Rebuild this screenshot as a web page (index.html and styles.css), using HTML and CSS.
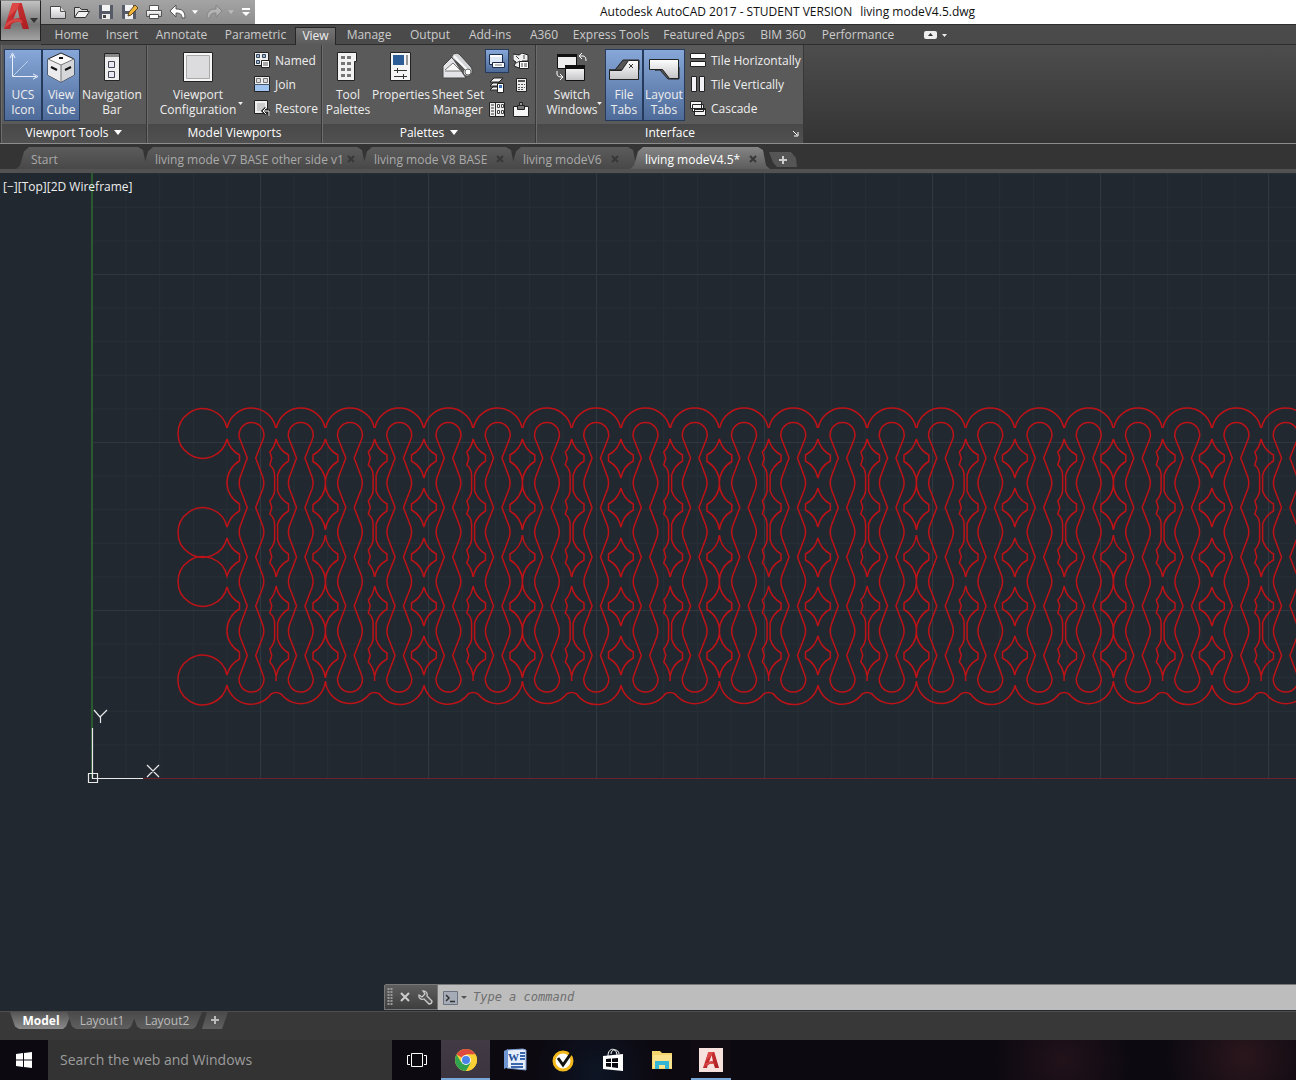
FILE: index.html
```html
<!DOCTYPE html>
<html lang="en">
<head>
<meta charset="utf-8">
<title>Autodesk AutoCAD 2017 - living modeV4.5.dwg</title>
<link rel="stylesheet" href="styles.css">
</head>
<body>
<svg class="defs" aria-hidden="true">
  <defs>
    <linearGradient id="silver" x1="0" y1="0" x2="0" y2="1"><stop offset="0" stop-color="#fff"/><stop offset="1" stop-color="#c4c4c8"/></linearGradient>
    <linearGradient id="logoRed" x1="0" y1="0" x2="1" y2="1"><stop offset="0" stop-color="#d8383a"/><stop offset="1" stop-color="#a81d21"/></linearGradient>
    <symbol id="acad" viewBox="0 0 24 26">
      <path d="M0 25 8 1h9l7 24h-6l-2-6c-4-1-7 0-9 2l-1 4zM13 6 9 16c2-1 4-1 6-1z" fill="url(#logoRed)" fill-rule="evenodd"/>
      <path d="M8 1 4 14l9-8 2-5zM2 20c5-5 11-5 15-3l1 3C13 17 7 18 1 24z" fill="#e2524e" opacity=".7"/>
    </symbol>
    <symbol id="cross" viewBox="0 0 10 10"><path d="m2 2 6 6m0-6-6 6" stroke="currentColor" stroke-width="2" fill="none"/></symbol>
    <symbol id="down" viewBox="0 0 8 5"><path d="M0 0h8L4 5z" fill="currentColor"/></symbol>
    <symbol id="plus" viewBox="0 0 10 10"><path d="M5 1v8M1 5h8" stroke="currentColor" stroke-width="2"/></symbol>
  </defs>
</svg>

<header class="top">
  <button class="app-button" aria-label="Application menu">
    <svg width="25" height="28" viewBox="0 0 24 26" preserveAspectRatio="none"><use href="#acad" width="24" height="26"/></svg>
    <svg class="app-arrow" width="8" height="5"><use href="#down"/></svg>
  </button>
  <div class="top-rows">
    <div class="title-row">
      <div class="quick">
        <button aria-label="New"><svg width="18" height="16"><path d="M1.500 2.500h10l5 5v7h-15z" fill="url(#silver)" stroke="#444"/><path d="M11.500 2.500v5h5" fill="#ddd" stroke="#555"/></svg></button>
        <button aria-label="Open"><svg width="18" height="16"><path d="M1.500 13.500v-10h5l2 2h6v3" fill="#ddd" stroke="#333"/><path d="m1.500 13.500 4-6h11l-4 6z" fill="#f2f2f2" stroke="#333"/></svg></button>
        <button aria-label="Save"><svg width="18" height="16"><path d="M2 1h14v14H3l-1-1z" fill="#555a66"/><path d="M5 1h8v6H5z" fill="#f4f4f4"/><path d="M5 10h8v5H5z" fill="#eee"/><path d="M6 11h3v3H6z" fill="#444"/></svg></button>
        <button aria-label="Save as"><svg width="18" height="16"><path d="M1 1h14v14H2l-1-1z" fill="#555a66"/><path d="M4 1h8v6H4z" fill="#f4f4f4"/><path d="M4 10h8v5H4z" fill="#eee"/><path d="m7 12 1-4 6-7 3 3-7 7z" fill="#f2b63c" stroke="#5b4722"/></svg></button>
        <button aria-label="Plot"><svg width="18" height="16"><path d="M4.500 1.500h9v5h-9z" fill="#fff" stroke="#555"/><path d="M1.500 6.500h15v6h-15z" fill="url(#silver)" stroke="#555"/><path d="M4.500 10.500h9v4h-9z" fill="#fff" stroke="#555"/></svg></button>
        <button aria-label="Undo"><svg width="18" height="16"><path d="m1 7 6-6v4c6 0 9 2 9 9h-3c0-4-2-5-6-5v4z" fill="#fff" stroke="#555"/></svg></button>
        <svg class="mini" width="6" height="4"><use href="#down" width="6" height="4"/></svg>
        <button aria-label="Redo"><svg width="18" height="16"><path d="m17 7-6-6v4c-6 0-9 2-9 9h3c0-4 2-5 6-5v4z" fill="#b3b3b3" stroke="#858585"/></svg></button>
        <svg class="mini faint" width="6" height="4"><use href="#down" width="6" height="4"/></svg>
        <button class="narrow" aria-label="Customize"><svg width="10" height="10"><path d="M1 1h8v2H1zM1 5h8L5 9z" fill="#fff"/></svg></button>
      </div>
      <p class="window-title"><span>Autodesk AutoCAD 2017 - STUDENT VERSION</span><span>living modeV4.5.dwg</span></p>
    </div>
    <nav class="ribbon-tabs">
      <button>Home</button><button>Insert</button><button>Annotate</button><button>Parametric</button><button class="active">View</button><button>Manage</button><button>Output</button><button>Add-ins</button><button>A360</button><button>Express Tools</button><button>Featured Apps</button><button>BIM 360</button><button>Performance</button>
      <button class="minimise" aria-label="Minimize ribbon"><svg width="24" height="10"><rect y="1" width="13" height="8" rx="2" fill="#eee"/><path d="M4 6h5L6.500 3z" fill="#333"/><path d="M18 4h5l-2.500 3z" fill="#eee"/></svg></button>
    </nav>
  </div>
</header>

<section class="ribbon">
  <div class="panel p-tools">
    <div class="panel-body">
      <button class="big on w-ucs"><svg width="32" height="32"><path d="M5.500 4v21.500H29" fill="none" stroke="#e9f0fa"/><path d="m3 7 2.500-5L8 7M26 23l5 2.500-5 2.500" fill="none" stroke="#e9f0fa"/><path d="M6 25 21 10" stroke="#bdd0ea"/></svg><span>UCS<br>Icon</span></button>
      <button class="big on w-cube"><svg width="32" height="32"><path d="m16 2 13 6v16l-13 7L3 24V8z" fill="#fafafa" stroke="#222"/><path d="m16 14 13-6v16l-13 7z" fill="#d5d7da"/><path d="M3 8l13 6v17L3 24z" fill="#ececee"/><path d="M3 8l13 6 13-6M16 14v17" fill="none" stroke="#777"/><path d="M14 7h4M6 16l6 3m8 0 6-3" stroke="#111" stroke-width="2"/></svg><span>View<br>Cube</span></button>
      <button class="big w-nav"><svg width="32" height="32"><path d="M8.500 2.500h15v27h-15z" fill="#eee" stroke="#222"/><path d="M9 3h14v3H9z" fill="#888"/><path d="M12.500 10.500h6v6h-6zM12.500 20.500h6v6h-6z" fill="#e8e8f0" stroke="#445"/></svg><span>Navigation<br>Bar</span></button>
    </div>
    <h2>Viewport Tools <svg width="8" height="5"><use href="#down" width="8" height="5"/></svg></h2>
  </div>
  <div class="panel p-views">
    <div class="panel-body">
      <button class="big w-config"><svg width="32" height="32"><path d="M1.500 1.500h29v29h-29z" fill="#f6f6f6" stroke="#222"/><path d="M4.500 4.500h23v23h-23z" fill="#dcdcde" stroke="#aaa"/></svg><span>Viewport<br>Configuration</span><svg class="drop" width="5" height="3"><use href="#down" width="5" height="3"/></svg></button>
      <div class="rows">
        <button><svg width="16" height="16"><path d="M.5.5h14v13H.5z" fill="#eee" stroke="#222"/><path d="M2.500 2.500h3v3h-3zM2.500 8.500h3v3h-3zM8.500 2.500h3v3h-3z" fill="#9db6d8" stroke="#345"/><path d="M7.500 8.500h8v7h-8z" fill="#fff" stroke="#222"/><path d="M9 11h5M9 13h5" stroke="#555"/></svg>Named</button>
        <button><svg width="16" height="16"><path d="M.5.5h15v15H.5z" fill="#eee" stroke="#222"/><path d="M2.500 2.500h4v4h-4zM9.500 2.500h4v4h-4z" fill="#ddd" stroke="#777"/><path d="M1 9h14v6H1z" fill="#9fc4ef"/><path d="M0 8.500h16" stroke="#456"/></svg>Join</button>
        <button><svg width="16" height="16"><path d="M.5.5h13v13H.5z" fill="#eee" stroke="#222"/><path d="M3 3h8v8H3z" fill="#ccc"/><path d="M15 16v-5H9m3-3-3 3 3 3" fill="none" stroke="#222" stroke-width="3"/><path d="M15 16v-5H9m3-3-3 3 3 3" fill="none" stroke="#fff"/></svg>Restore</button>
      </div>
    </div>
    <h2>Model Viewports</h2>
  </div>
  <div class="panel p-palettes">
    <div class="panel-body">
      <button class="big w-tool"><svg width="32" height="32"><path d="M5.500 1.500h19v9h-2v19h-17z" fill="#f2f2f2" stroke="#222"/><path d="M9 5h4v3H9zm6 0h4v3h-4zM9 11h4v3H9zm6 0h4v3h-4zM9 17h4v3H9zm6 0h4v3h-4zM9 23h4v3H9zm6 0h4v3h-4z" fill="#777"/></svg><span>Tool<br>Palettes</span></button>
      <button class="big w-props"><svg width="32" height="32"><path d="M5.500 1.500h20v28h-20z" fill="#f5f5f5" stroke="#222"/><path d="M8 4h11v10H8z" fill="#2d5d96"/><path d="M21 4h2v10h-2z" fill="#999"/><path d="M9 19.500h13M9 25.500h13M12.500 17v5m6 1v5" stroke="#333"/></svg><span>Properties</span></button>
      <button class="big w-sheet"><svg width="32" height="32"><path d="m1 15 9-9 6 9 8 12H1z" fill="#e4e4e8" stroke="#444"/><path d="M10 7c-1-5 6-6 8-3l11 12c3 5 0 10-5 9-3-1-4-5-1-7z" fill="#d4d5d9" stroke="#444"/><path d="m12 5 13 14" stroke="#fafafa" stroke-width="2"/><path d="m3 19 8-7 8 8H3" fill="#f8f8f8" stroke="#777"/><circle cx="26" cy="21" r="3" fill="#fff" stroke="#666"/></svg><span>Sheet Set<br>Manager</span></button>
      <div class="icon-grid">
        <button class="on" aria-label="Command line"><svg width="18" height="18"><path d="M1.500 2.500h13v10h-13z" fill="#dfe9f6" stroke="#1c2c48"/><path d="M2 3h12v2H2z" fill="#fff"/><path d="M4.500 10.500h12v5h-12z" fill="#fff" stroke="#1c2c48"/><path d="M7 13h7" stroke="#777"/></svg></button>
        <button aria-label="External references"><svg width="16" height="16"><path d="m0 1 6 1 3-2 6 2v6H9l-3 7-5-2 2-4-3-2z" fill="#eee" stroke="#222"/><path d="m3 3 3 3m5-4v4m-8 4 4-2" stroke="#444"/><path d="M6.500 8.500h9v7h-9z" fill="#fff" stroke="#222"/><path d="M8 11h2m1 0h3m-6 2h2m1 0h3" stroke="#444"/></svg></button>
        <button aria-label="Layer properties"><svg width="16" height="16"><path d="m1 5 4-4h9l-4 4zM1 9l3-3h8l-3 3zM1 13l3-3h7l-3 3z" fill="#f5f5f5" stroke="#222"/><path d="M8.500 6.500h6v9h-6z" fill="#fff" stroke="#222"/><path d="M10 8h3v3h-3z" fill="#3d73b8"/></svg></button>
        <button aria-label="Calculator"><svg width="16" height="16"><path d="M3.500 1.500h10v13h-10z" fill="#eee" stroke="#222"/><path d="M5 3h7v2H5zM5 7h2v1H5zm3 0h2v1H8zm3 0h1v1h-1zM5 10h2v1H5zm3 0h2v1H8zm3 0h1v1h-1zM5 12h2v1H5zm3 0h2v1H8z" fill="#555"/></svg></button>
        <button aria-label="Design center"><svg width="16" height="16"><path d="M.5 1.500h15v14H.5z" fill="#eee" stroke="#222"/><path d="M6.500 2v13M2 4h3M2 7h3M2 10h3M2 13h3" stroke="#333"/><path d="M8.500 3.500h2v3h-2zm4 0h2v3h-2zm-4 6h2v3h-2zm4 0h2v3h-2z" fill="#fff" stroke="#444"/></svg></button>
        <button aria-label="Markup set manager"><svg width="16" height="16"><path d="M.5 5.500h15v10H.5z" fill="#f6f6f6" stroke="#222"/><path d="M4.500 4.500h7v4h-7z" fill="#777" stroke="#222"/><path d="M6.500 1.500h3v3h-3z" fill="#999" stroke="#222"/></svg></button>
      </div>
    </div>
    <h2>Palettes <svg width="8" height="5"><use href="#down" width="8" height="5"/></svg></h2>
  </div>
  <div class="panel p-interface">
    <div class="panel-body">
      <button class="big w-switch"><svg width="32" height="32"><path d="M1.500 3.500h19v14h-19z" fill="#eee" stroke="#111"/><path d="M1 3h20v3H1z" fill="#111"/><path d="M9.500 14.500h19v15h-19z" fill="url(#silver)" stroke="#111"/><path d="M9 14h20v4H9z" fill="#111"/><path d="M24 5h3q3 0 3 5M26 2l-3 3 3 3M1 20v3q0 3 5 3M4 23l3 3-3 3" fill="none" stroke="#fff"/></svg><span>Switch<br>Windows</span><svg class="drop" width="5" height="3"><use href="#down" width="5" height="3"/></svg></button>
      <button class="big on w-file"><svg width="32" height="32"><path d="M1 19h6l8-10h16v10z" fill="#555" stroke="#222"/><path d="M1.500 28.500v-9h12l7-10h10v19z" fill="url(#silver)" stroke="#222"/><path d="m21 13 4 4m0-4-4 4" stroke="#333"/></svg><span>File<br>Tabs</span></button>
      <button class="big on w-layout"><svg width="32" height="32"><path d="M7 19h5l8 9h11V16z" fill="#555" stroke="#222"/><path d="M1.500 8.500h29v19h-9l-7-9h-13z" fill="url(#silver)" stroke="#222"/></svg><span>Layout<br>Tabs</span></button>
      <div class="rows">
        <button><svg width="16" height="16"><path d="M.5 1.500h15v5H.5zM.5 9.500h15v5H.5z" fill="#fff" stroke="#222"/></svg>Tile Horizontally</button>
        <button><svg width="16" height="16"><path d="M1.500.5h5v15h-5zM9.500.5h5v15h-5z" fill="#f1f1f6" stroke="#222"/></svg>Tile Vertically</button>
        <button><svg width="16" height="16"><path d="M.5 1.500h11v7H.5zM2.500 4.500h11v7h-11zM4.500 8.500h11v7h-11z" fill="#f4f4f4" stroke="#222"/><path d="M5 9h10v1H5z" fill="#222"/></svg>Cascade</button>
      </div>
    </div>
    <h2>Interface <svg class="launcher" width="7" height="7"><path d="m1 1 4 4M6 2v4H2" fill="none" stroke="#fff"/></svg></h2>
  </div>
</section>

<nav class="file-tabs">
  <button class="ft-start"><span>Start</span></button>
  <button><span>living mode V7 BASE other side v1</span><svg width="10" height="10"><use href="#cross"/></svg></button>
  <button><span>living mode V8 BASE</span><svg width="10" height="10"><use href="#cross"/></svg></button>
  <button><span>living modeV6</span><svg width="10" height="10"><use href="#cross"/></svg></button>
  <button class="active"><span>living modeV4.5*</span><svg width="10" height="10"><use href="#cross"/></svg></button>
  <button class="add" aria-label="New drawing"><svg width="10" height="10"><use href="#plus"/></svg></button>
</nav>

<main class="canvas">
  <svg class="drawing" aria-label="Living hinge pattern">
    <defs>
      <pattern id="minor" patternUnits="userSpaceOnUse" x="92" y="269" width="33.600" height="33.600"><path d="M0 .5h33.600M.5 0v33.600" stroke="#262e36"/></pattern>
      <pattern id="major" patternUnits="userSpaceOnUse" x="92" y="101" width="168" height="168"><path d="M0 .5h168M.5 0v168" stroke="#2f3840"/></pattern>
      <path id="slot" d="M-11.500 266.500A12.400 12.400 0 1 1 11.500 266.500L4.200 285 11.300 304Q13.300 310 11.300 316L4.200 334.500 11.300 353Q13.300 359 11.300 365L4.200 384 11.300 402.500Q13.300 408.500 11.300 414.500L4.200 433 11.300 452Q13.300 458 11.300 464L4.200 482.500 11.500 502A12.400 12.400 0 1 1-11.500 502L-4.200 482.500-11.300 464Q-13.300 458-11.300 452L-4.200 433-11.300 414.500Q-13.300 408.500-11.300 402.500L-4.200 384-11.300 365Q-13.300 359-11.300 353L-4.200 334.500-11.300 316Q-13.300 310-11.300 304L-4.200 285z"/>
      <path id="crest" d="M-24.100 255v-1A24.800 24.800 0 0 1 24.100 254v1"/>
      <path id="keyed" d="M0 266A25 25 0 0 0 12.400 282V288A24.700 24.700 0 0 0 1.500 302V318A24.700 24.700 0 0 0 12.400 331V338A24.700 24.700 0 0 0 1.500 351V367A24.700 24.700 0 0 0 12.400 381V387A24.700 24.700 0 0 0 0 404Q-1.500 395-6.300 390L-4.300 384-6.300 377Q-1.500 371-1.500 366V352Q-1.500 345-6.300 341L-4.300 334.500-6.300 328Q-1.500 322-1.500 317V303Q-1.500 296-6.300 292L-4.300 285-6.300 279Q-1.500 274 0 266zM0 413A25 25 0 0 0 12.400 430V436A24.700 24.700 0 0 0 1.500 450V466A24.700 24.700 0 0 0 12.400 480V486A24.700 24.700 0 0 0 0 503V508 503Q-1.500 494-6.300 489L-4.300 482.500-6.300 476Q-1.500 470-1.500 465V451Q-1.500 444-6.300 440L-4.300 433-6.300 427Q-1.500 422 0 413z"/>
      <path id="chain" d="M0 266A25 25 0 0 0 12.400 282V288.500A24.700 24.700 0 0 0 12.400 331.500V338A25 25 0 0 0 0 357A25 25 0 0 0-12.400 338V331.500A24.700 24.700 0 0 0-12.400 288.500V282A25 25 0 0 0 0 266zM0 362A25 25 0 0 0 12.400 381V387A24.700 24.700 0 0 0 12.400 430V436.500A24.700 24.700 0 0 0 12.400 479.500V486A25 25 0 0 0 0 505A25 25 0 0 0-12.400 486V479.500A24.700 24.700 0 0 0-12.400 436.500V430A24.700 24.700 0 0 0-12.400 387V381A25 25 0 0 0 0 362z"/>
      <path id="gem" d="M0-19A25 25 0 0 0 12.400-3V3A25 25 0 0 0 0 20A25 25 0 0 0-12.400 3V-3A25 25 0 0 0 0-19z"/>
      <g id="gems"><use href="#gem" y="285"/><use href="#gem" y="334"/><use href="#gem" y="384"/><use href="#gem" y="433"/><use href="#gem" y="482"/></g>
      <g id="motif">
        <use href="#slot"/><use href="#slot" x="49.250"/><use href="#slot" x="98.500"/><use href="#slot" x="147.750"/>
        <use href="#crest"/><use href="#crest" x="49.250"/><use href="#crest" x="98.500"/><use href="#crest" x="147.750"/>
        <use href="#keyed" x="24.600"/><use href="#chain" x="73.900"/><use href="#keyed" x="123.100"/><use href="#gems" x="172.400"/>
        <path d="M-24.600 512A24.800 24.800 0 0 0 19.600 521Q24.600 518 29.600 521A24.800 24.800 0 0 0 73.900 508A24.800 24.800 0 0 0 118.100 521Q123.100 518 128.100 521A24.800 24.800 0 0 0 172.400 513"/>
      </g>
    </defs>
    <svg width="100%" height="605">
      <rect x="92" width="100%" height="605" fill="url(#minor)"/>
      <rect x="92" width="100%" height="605" fill="url(#major)"/>
    </svg>
    <path d="M92 0v605" stroke="#28592f" stroke-width="2"/>
    <path d="M92 605.500h3000" stroke="#6b2228"/>
    <g class="cut">
      <use href="#motif" x="251.500"/><use href="#motif" x="448.500"/><use href="#motif" x="645.500"/><use href="#motif" x="842.500"/><use href="#motif" x="1039.500"/><use href="#motif" x="1236.500"/><use href="#motif" x="1433.500"/><use href="#motif" x="1630.500"/>
      <path d="M227 255A24.800 24.800 0 1 0 227 266Q230 277 239.500 282V288A24.700 24.700 0 0 0 239.500 331V338Q230 343 227 354A24.800 24.800 0 1 0 227 365Q230 376 239.500 381V388Q230 393 227 403A24.800 24.800 0 1 0 227 414Q230 425 239.500 430V436A24.700 24.700 0 0 0 239.500 479V486Q230 491 227 502A24.800 24.800 0 1 0 227 512"/>
    </g>
    <g class="ucs"><path d="M92.500 555v50.500H143M88.500 600.500h9v9h-9zM94 537l6 7 7-7M100.500 544v6M147 592l12 12m0-12-12 12"/></g>
  </svg>
  <p class="view-label">[−][Top][2D Wireframe]</p>
  <form class="command">
    <div class="command-tools">
      <svg width="6" height="20"><path d="M1.500 1v18M4.500 1v18" stroke="#999" stroke-width="2" stroke-dasharray="2 1"/></svg>
      <button type="button" aria-label="Close"><svg width="12" height="14"><path d="m2 3 8 8m0-8-8 8" stroke="#ccc" stroke-width="2"/></svg></button>
      <button type="button" aria-label="Customize"><svg width="16" height="16"><path d="M6 2c3 0 5 2 4 5l5 5c0 2-1 3-3 3L7 10C4 11 1 9 2 6l3 2 3-3z" fill="#555" stroke="#ccc" stroke-width="1.300"/></svg></button>
    </div>
    <label class="prompt" for="cmd"><svg width="24" height="14" role="img" aria-label="Command"><path d="M.5.500h14v13H.5z" fill="#a5acb8" stroke="#6c7380"/><path d="m3 4 3 3-3 3M7 10.500h5" fill="none" stroke="#333" stroke-width="1.500"/><path d="M18 5h6l-3 3z" fill="#555"/></svg></label>
    <input id="cmd" type="text" placeholder="Type a command">
  </form>
</main>

<nav class="layout-tabs">
  <button class="active">Model</button><button>Layout1</button><button>Layout2</button>
  <button class="add" aria-label="New layout"><svg width="10" height="10"><use href="#plus"/></svg></button>
</nav>

<footer class="taskbar">
  <button class="start" aria-label="Start"><svg width="16" height="16"><path d="m0 2 7-1v6.500H0zM8 1l8-1v7.500H8zM0 8.500h7V15l-7-1zM8 8.500h8V16l-8-1z" fill="#fff"/></svg></button>
  <input class="search" type="text" aria-label="Search" placeholder="Search the web and Windows">
  <button aria-label="Task view"><svg width="20" height="16"><path d="M4.500 1.500h11v13h-11zM3 3.500H.5v9H3M17 3.500h2.500v9H17" fill="none" stroke="#fff"/></svg></button>
  <button class="running" aria-label="Chrome"><svg width="22" height="22" viewBox="0 0 22 22"><circle cx="11" cy="11" r="11" fill="#fbd035"/><path d="M11 11 1.500 5.500A11 11 0 0 1 20.500 5.500H11z" fill="#dd4b3e"/><path d="M1.500 5.500A11 11 0 0 0 11 22l5-8-5-3-5 2z" fill="#30a250"/><path d="M11 22a11 11 0 0 0 9.500-16.500H11l5 8z" fill="#fbd035"/><circle cx="11" cy="11" r="5" fill="#f4f4f4"/><circle cx="11" cy="11" r="4" fill="#4a83e8"/></svg></button>
  <button aria-label="Word"><svg width="24" height="24"><path d="M4 2 20 1l3 1v20L4 20z" fill="#e6eefa" stroke="#7b9bcc"/><path d="M1 3 5 1v18l-4 2z" fill="#6f96d2"/><path d="M8 16h12M8 19h12M17 5h5M17 8h5M17 11h5" stroke="#3a66ad" stroke-width="2"/><text x="5" y="13" class="word-w">W</text></svg></button>
  <button aria-label="Norton"><svg width="24" height="24"><circle cx="11" cy="13" r="9" fill="#fff" stroke="#f2b81c" stroke-width="3"/><path d="m6 10 5 7L20 4" fill="none" stroke="#111" stroke-width="3"/></svg></button>
  <button aria-label="Store"><svg width="24" height="24"><path d="M7 8c0-9 9-9 9 0M10 6c0-6 8-5 8 0" fill="none" stroke="#fff"/><path d="m2 8 20-2v17L2 21z" fill="#fff"/><path d="m5 11 5-.500V14H5zm6-.600 6-.400v4h-6zM5 15h5v4l-5-.500zm6 0h6v5l-6-.800z" fill="#08060f"/></svg></button>
  <button aria-label="File Explorer"><svg width="24" height="24"><path d="M2 3h8l2 2h10v16H2z" fill="#f2d56b"/><path d="M3 7h19v13H3z" fill="#fbe38d"/><path d="M5 13h14v8h-4v-4H9v4H5z" fill="#35b5d4"/></svg></button>
  <button class="running autocad" aria-label="AutoCAD"><svg width="24" height="24"><path d="M0 0h24v24H0z" fill="#f7e2de"/><use href="#acad" x="4" y="3" width="16" height="18"/></svg></button>
</footer>
</body>
</html>
```
FILE: styles.css
```css
* { box-sizing: border-box; }

body {
  margin: 0;
  height: 100vh;
  display: flex;
  flex-direction: column;
  overflow: hidden;
  background: #21282f;
  color: #eee;
  font: 12px/15px "Open Sans", "Noto Sans", sans-serif;
}

button, input { font: inherit; color: inherit; border: 0; margin: 0; padding: 0; background: none; }
h2, p { margin: 0; font-size: inherit; font-weight: 400; }
svg { flex: none; display: block; }
.defs { position: absolute; width: 0; height: 0; }

/* title bar and ribbon tabs */
.top { display: flex; flex: none; background: #4a4a4a; }
.app-button {
  width: 41px; height: 41px; flex: none;
  display: flex; align-items: flex-start; gap: 1px;
  margin-bottom: -1px; padding: 1px 0 0 3px;
  border: 1px solid #222; border-top-color: #888;
  background: linear-gradient(#c2c2c2, #777 60%, #a2a2a2);
  color: #333;
}
.app-arrow { margin-top: 16px; }
.top-rows { flex: 1; min-width: 0; }
.title-row { display: flex; height: 24px; background: #fff; color: #111; }
.quick {
  display: flex; align-items: center; flex: none;
  width: 214px; padding-left: 5px;
  background: linear-gradient(#a4a4a4, #8e8e8e);
}
.quick button { width: 24px; flex: none; display: grid; place-items: center; }
.quick .narrow { width: 16px; }
.mini { margin: 0 4px 0 2px; color: #fff; }
.faint { color: #bbb; }
.window-title { flex: 1; display: flex; gap: 8px; padding: 4px 0 0 345px; white-space: nowrap; }
.ribbon-tabs {
  display: grid;
  grid-template-columns: 51px 50px 69px 79px 41px 66px 56px 64px 44px 90px 96px 62px 88px 68px;
  height: 21px; padding-left: 5px;
  border-top: 1px solid #2c2c2c; border-bottom: 1px solid #2c2c2c;
  background: #4a4a4a; color: #ccc;
}
.ribbon-tabs button { white-space: nowrap; }
.ribbon-tabs .active {
  margin: 2px 0 -1px; padding-bottom: 2px;
  border: 1px solid #262626; border-bottom: 0;
  background: linear-gradient(#747474, #5a5a5a);
  color: #eee;
}
.minimise { display: grid; place-items: center; }

/* ribbon */
.ribbon {
  display: flex; flex: none; height: 99px;
  padding-left: 1px;
  border-bottom: 1px solid #8c8c8c;
  background: linear-gradient(#4d4d4d, #343434);
}
.panel {
  display: flex; flex-direction: column; flex: none;
  border-right: 1px solid #383838; border-left: 1px solid #6c6c6c;
  background: #5a5a5a;
}
.p-tools { width: 146px; }
.p-views { width: 175px; }
.p-palettes { width: 214px; }
.p-interface { width: 268px; }
.panel-body { display: flex; flex: 1; padding: 4px 2px 3px; }
.panel h2 {
  display: flex; align-items: center; justify-content: center; gap: 6px;
  height: 19px; flex: none; position: relative;
  padding-bottom: 3px;
  background: linear-gradient(#484848, #515151);
  color: #fff;
}
.launcher { position: absolute; right: 4px; bottom: 6px; }
.big {
  position: relative; flex: none;
  display: flex; flex-direction: column; align-items: center; gap: 4px;
  padding-top: 1px;
  border: 1px solid transparent;
  white-space: nowrap;
}
.big.on, .icon-grid .on { border-color: #263a5c; background: linear-gradient(#86a7d8, #4d6a98); }
.big span { margin: 0 -8px; }
.drop { position: absolute; right: 2px; top: 52px; }
.w-ucs, .w-cube, .w-file { width: 38px; }
.w-nav { width: 64px; }
.w-config { width: 96px; }
.w-tool { width: 46px; }
.w-props { width: 60px; }
.w-sheet { width: 54px; }
.w-switch { width: 66px; }
.w-layout { width: 42px; }
.rows { display: grid; grid-template-rows: repeat(3, 24px); margin: -1px 0 0 8px; }
.p-interface .rows { margin-left: 5px; }
.rows button { display: flex; align-items: center; gap: 5px; white-space: nowrap; }
.icon-grid { display: grid; grid-template: repeat(3, 24px) / 24px 24px; }
.icon-grid button { display: grid; place-items: center; border: 1px solid transparent; }

/* drawing tabs */
.file-tabs {
  display: flex; flex: none; height: 29px;
  padding: 3px 0 0 16px;
  border-bottom: 4px solid #525252;
  background: #343434; color: #aaa;
}
.file-tabs button {
  display: flex; align-items: center; gap: 8px; flex: none;
  margin-right: -10px; padding: 2px 20px 0 15px;
  background: linear-gradient(#5c5c5c, #484848);
  clip-path: polygon(0 100%, 4px 84%, 8px 20%, 13px 0, calc(100% - 12px) 0, calc(100% - 7px) 14%, calc(100% - 4px) 84%, 100% 100%);
  white-space: nowrap;
}
.file-tabs button:nth-child(1) { width: 134px; }
.file-tabs button:nth-child(2) { width: 229px; }
.file-tabs button:nth-child(3) { width: 159px; padding-right: 24px; }
.file-tabs button:nth-child(4) { width: 132px; }
.file-tabs button:nth-child(5) { width: 140px; padding-right: 26px; }
.file-tabs button:nth-child(2) { gap: 2px; padding-right: 22px; }
.file-tabs button span { flex: 1; text-align: left; }
.file-tabs svg { color: #383838; }
.file-tabs .active { background: linear-gradient(#858585, #5c5c5c); color: #fff; }
.file-tabs .add {
  width: 28px; height: 15px; margin: 5px 0 0 9px; padding: 0 9px;
  background: #555;
  clip-path: polygon(0 0, 22px 0, 27px 40%, 28px 100%, 8px 100%, 4px 70%);
}
.file-tabs .add svg { color: #ccc; }

/* model space */
.canvas { flex: 1; min-height: 0; position: relative; overflow: hidden; background: #21282f; }
.drawing { width: 100%; height: 100%; }
.cut { fill: none; stroke: #bd1318; stroke-width: 1.500; }
.ucs { fill: none; stroke: #e8e8e8; stroke-width: 1.200; }
.view-label { position: absolute; left: 3px; top: 6px; }
.command {
  position: absolute; left: 384px; right: 0; bottom: 1px;
  display: flex; height: 26px;
  border-top: 1px solid #777;
  border-radius: 3px 0 0 0;
  background: #bdbdbd;
}
.command-tools {
  display: flex; align-items: center; gap: 6px;
  width: 54px; padding-left: 2px;
  border: 1px solid #777; border-top: 0;
  background: linear-gradient(#5e5e5e, #3e3e3e);
}
.prompt { display: flex; align-items: center; padding: 0 6px 0 5px; }
.command input { flex: 1; min-width: 0; font: italic 12px/15px "DejaVu Sans Mono", monospace; color: #222; }
.command input::placeholder { color: #6e6e6e; opacity: 1; }

/* layout tabs */
.layout-tabs {
  display: flex; flex: none; height: 29px;
  padding-left: 10px;
  border-top: 1px solid #4e4e4e;
  background: #383838; color: #bbb;
}
.layout-tabs button {
  width: 70px; height: 17px;
  margin-right: -5px; padding-bottom: 1px;
  background: linear-gradient(#4a4a4a, #5f5f5f);
  clip-path: polygon(0 0, 100% 0, calc(100% - 6px) 86%, calc(100% - 9px) 100%, 9px 100%, 5px 86%);
}
.layout-tabs .active { width: 62px; background: linear-gradient(#555, #8a8a8a); color: #fff; font-weight: 700; }
.layout-tabs .add { display: grid; place-items: center; width: 26px; margin-left: 5px; clip-path: polygon(5px 0, 100% 0, 20px 100%, 0 100%); }

/* taskbar */
.taskbar {
  display: flex; flex: none; height: 40px;
  background:
    radial-gradient(circle at 82% 50%, #22121a 0, transparent 70px),
    radial-gradient(circle at 96% 40%, #2a161c 0, transparent 80px),
    radial-gradient(circle at 46% 80%, #0d1524 0, transparent 60px),
    #0c0911;
}
.taskbar button { width: 49px; display: grid; place-items: center; }
.taskbar .start { width: 48px; }
.search { width: 344px; padding-left: 12px; background: #333; font-size: 14px; line-height: 20px; }
.search::placeholder { color: #9c9c9c; opacity: 1; }
.taskbar .running { background: linear-gradient(#423a44, #3c343e) 0 0 / 100% 38px no-repeat, #78a7d8; }
.taskbar .autocad { width: 40px; margin-left: 5px; background: linear-gradient(#100b13, #100b13) 0 0 / 100% 38px no-repeat, #78a7d8; }
.word-w { font: 700 11px "Liberation Serif", serif; fill: #234f9a; }
```
